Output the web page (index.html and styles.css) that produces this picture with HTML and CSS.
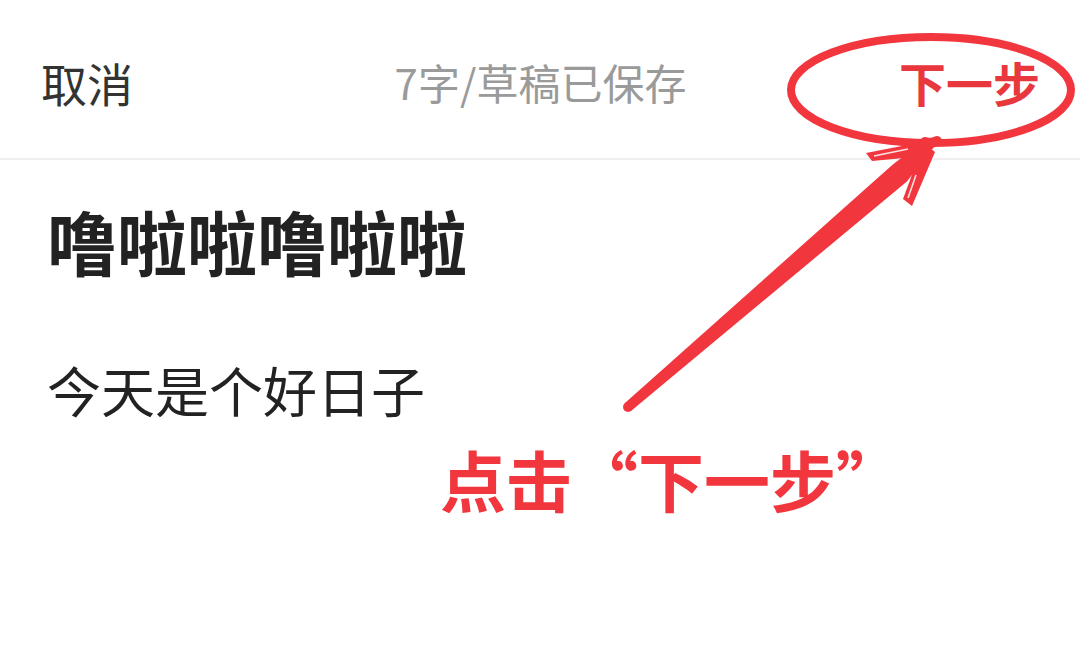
FILE: index.html
```html
<!DOCTYPE html>
<html lang="zh-CN">
<head>
<meta charset="utf-8">
<title>编辑</title>
<link rel="stylesheet" href="styles.css">
</head>
<body>
<div class="page">
  <header class="topbar">
    <span class="cancel">取消</span>
    <span class="status">7字/草稿已保存</span>
    <span class="next">下一步</span>
  </header>
  <main class="editor">
    <h1 class="title">噜啦啦噜啦啦</h1>
    <p class="body-text">今天是个好日子</p>
  </main>

  <svg class="markup" viewBox="0 0 1080 661" width="1080" height="661" aria-hidden="true">
    <ellipse cx="931" cy="90" rx="140" ry="53" fill="none" stroke="#f2363e" stroke-width="8"/>
    <path d="M925 142 Q931 144 937 141" fill="none" stroke="#f2363e" stroke-width="10" stroke-linecap="round"/>
    <!-- shaft -->
    <polygon fill="#f2363e" points="631.3,410.8 624.7,403.2 892.5,164.8 917,146 934,147 906.9,181.4"/>
    <circle cx="628" cy="407" r="5" fill="#f2363e"/>
    <!-- left barb -->
    <polygon fill="#f2363e" points="866,153 912,144 930,147 904,158 872,161"/>
    <line x1="874" y1="156" x2="908" y2="149" stroke="#fff" stroke-width="1.6" stroke-opacity="0.85"/>
    <!-- lower barb -->
    <polygon fill="#f2363e" points="903,199 913,172 930,148 935,152 912,206"/>
    <line x1="908" y1="198" x2="916" y2="175" stroke="#fff" stroke-width="1.6" stroke-opacity="0.85"/>
  </svg>

  <div class="callout">点击“下一步”</div>
</div>
</body>
</html>
```

FILE: styles.css
```css
* {
  box-sizing: border-box;
}

html, body {
  margin: 0;
  padding: 0;
  background: #ffffff;
}

body {
  font-family: "Noto Sans CJK SC", "Noto Sans", sans-serif;
  color: #222222;
}

.page {
  position: relative;
  width: 1080px;
  height: 661px;
  overflow: hidden;
}

.topbar {
  height: 160px;
  padding: 6px 40px 0 41px;
  display: flex;
  align-items: center;
  justify-content: space-between;
  border-bottom: 2px solid #efefef;
}

.cancel {
  font-size: 46px;
  line-height: 60px;
  color: #333333;
  width: 200px;
}

.status {
  font-size: 42px;
  line-height: 60px;
  color: #9a9a9a;
}

.next {
  font-size: 47px;
  line-height: 60px;
  font-weight: 700;
  color: #e8383d;
  width: 200px;
  text-align: right;
}

.editor {
  padding: 39px 0 0 47px;
}

.title {
  margin: 0;
  font-size: 70px;
  line-height: 84px;
  font-weight: 700;
  color: #222222;
}

.body-text {
  margin: 75px 0 0;
  font-size: 54px;
  line-height: 64px;
  color: #222222;
}

.markup {
  position: absolute;
  left: 0;
  top: 0;
  pointer-events: none;
}

.callout {
  position: absolute;
  left: 440px;
  top: 438px;
  font-size: 66px;
  line-height: 80px;
  font-weight: 700;
  color: #f2363e;
  white-space: nowrap;
}
```
